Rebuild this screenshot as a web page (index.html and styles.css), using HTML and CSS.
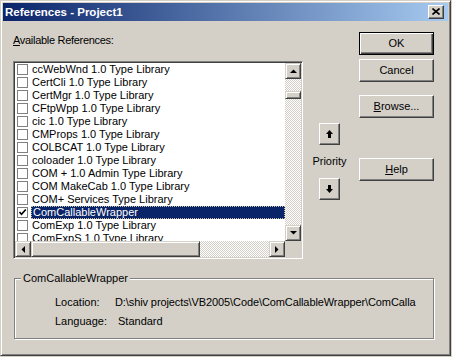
FILE: index.html
```html
<!DOCTYPE html>
<html>
<head>
<meta charset="utf-8">
<link rel="stylesheet" href="styles.css">
</head>
<body>
<div class="window">
  <div class="titlebar">
    <span class="title">References - Project1</span>
    <span class="close"><svg width="8" height="7" viewBox="0 0 8 7"><path d="M0.5 0.5 L7.5 6.5 M7.5 0.5 L0.5 6.5" stroke="#000" stroke-width="1.6"/></svg></span>
  </div>
  <div class="client">
    <div class="top">
      <div class="left">
        <div class="label"><u>A</u>vailable References:</div>
        <div class="listbox">
          <div class="rows">
            <div class="row"><span class="chk"></span><span class="txt">ccWebWnd 1.0 Type Library</span></div>
            <div class="row"><span class="chk"></span><span class="txt">CertCli 1.0 Type Library</span></div>
            <div class="row"><span class="chk"></span><span class="txt">CertMgr 1.0 Type Library</span></div>
            <div class="row"><span class="chk"></span><span class="txt">CFtpWpp 1.0 Type Library</span></div>
            <div class="row"><span class="chk"></span><span class="txt">cic 1.0 Type Library</span></div>
            <div class="row"><span class="chk"></span><span class="txt">CMProps 1.0 Type Library</span></div>
            <div class="row"><span class="chk"></span><span class="txt">COLBCAT 1.0 Type Library</span></div>
            <div class="row"><span class="chk"></span><span class="txt">coloader 1.0 Type Library</span></div>
            <div class="row"><span class="chk"></span><span class="txt">COM + 1.0 Admin Type Library</span></div>
            <div class="row"><span class="chk"></span><span class="txt">COM MakeCab 1.0 Type Library</span></div>
            <div class="row"><span class="chk"></span><span class="txt">COM+ Services Type Library</span></div>
            <div class="row selected"><span class="chk"><svg width="9" height="9" viewBox="0 0 9 9"><path d="M1.5 4 L3.5 6.2 L7.8 1.5" fill="none" stroke="#000" stroke-width="1.7"/></svg></span><span class="txt">ComCallableWrapper</span></div>
            <div class="row"><span class="chk"></span><span class="txt">ComExp 1.0 Type Library</span></div>
            <div class="row"><span class="chk"></span><span class="txt">ComExpS 1.0 Type Library</span></div>
          </div>
          <div class="vscroll">
            <div class="sbtn"><svg width="7" height="4" viewBox="0 0 7 4"><path d="M0 4 L7 4 L3.5 0.5 Z" fill="#000"/></svg></div>
            <div class="track vtrack"><div class="thumb vthumb"></div></div>
            <div class="sbtn"><svg width="7" height="4" viewBox="0 0 7 4"><path d="M0 0 L7 0 L3.5 3.5 Z" fill="#000"/></svg></div>
          </div>
          <div class="hscroll">
            <div class="sbtn"><svg width="4" height="7" viewBox="0 0 4 7"><path d="M4 0 L4 7 L0.5 3.5 Z" fill="#000"/></svg></div>
            <div class="track htrack"><div class="thumb hthumb"></div></div>
            <div class="sbtn"><svg width="4" height="7" viewBox="0 0 4 7"><path d="M0 0 L0 7 L3.5 3.5 Z" fill="#000"/></svg></div>
          </div>
          <div class="corner"></div>
        </div>
      </div>
      <div class="priority">
        <div class="pbtn"><svg width="7" height="8" viewBox="0 0 7 8"><path d="M3.5 0 L7 4 L5 4 L5 8 L2 8 L2 4 L0 4 Z" fill="#000"/></svg></div>
        <div class="plabel">Priority</div>
        <div class="pbtn"><svg width="7" height="8" viewBox="0 0 7 8"><path d="M3.5 8 L7 4 L5 4 L5 0 L2 0 L2 4 L0 4 Z" fill="#000"/></svg></div>
      </div>
      <div class="buttons">
        <div class="btn default">OK</div>
        <div class="btn cancel">Cancel</div>
        <div class="btn browse"><u>B</u>rowse...</div>
        <div class="btn help"><u>H</u>elp</div>
      </div>
    </div>
    <fieldset class="group">
      <legend>ComCallableWrapper</legend>
      <div class="info">
        <div class="irow"><span class="ilabel">Location:</span><span class="ival">D:\shiv projects\VB2005\Code\ComCallableWrapper\ComCalla</span></div>
        <div class="irow"><span class="ilabel">Language:</span><span class="ival lang">Standard</span></div>
      </div>
    </fieldset>
  </div>
</div>
</body>
</html>
```
FILE: styles.css
```css
body {
  margin: 0;
  background: #d4d0c8;
  font-family: "Liberation Sans", Arial, sans-serif;
  font-size: 11px;
  color: #000;
}
.window {
  box-sizing: border-box;
  width: 451px;
  height: 356px;
  padding: 2px;
  border: 1px solid;
  border-color: #d4d0c8 #404040 #404040 #d4d0c8;
  box-shadow: inset 1px 1px #fff, inset -1px -1px #808080;
  background: #d4d0c8;
}
.titlebar {
  height: 18px;
  background: linear-gradient(to right, #0a246a, #a6caf0);
  display: flex;
  align-items: center;
  justify-content: space-between;
  padding: 0 4px 0 2px;
}
.title {
  color: #fff;
  font-weight: bold;
  font-size: 11.5px;
  line-height: 18px;
}
.close {
  box-sizing: border-box;
  width: 16px;
  height: 14px;
  background: #d4d0c8;
  border: 1px solid;
  border-color: #fff #404040 #404040 #fff;
  box-shadow: inset -1px -1px #808080;
  display: flex;
  align-items: center;
  justify-content: center;
}
.close svg { display: block; margin-top: -1px; }
.client {
  padding: 11px 0 0 10px;
}
.top {
  display: flex;
}
.left {
  width: 290px;
  padding-top: 2px;
}
.label {
  line-height: 13px;
  margin-bottom: 14px;
  letter-spacing: -0.3px;
}
.listbox {
  box-sizing: border-box;
  width: 290px;
  height: 198px;
  border: 1px solid;
  border-color: #808080 #fff #fff #808080;
  box-shadow: inset 1px 1px #404040, inset -1px -1px #d4d0c8;
  padding: 1px;
  display: grid;
  grid-template-columns: 1fr 16px;
  grid-template-rows: 1fr 16px;
  background: #fff;
}
.rows {
  overflow: hidden;
  background: #fff;
}
.row {
  display: flex;
  align-items: center;
  height: 13px;
  line-height: 13px;
  white-space: nowrap;
}
.chk {
  box-sizing: border-box;
  width: 11px;
  height: 11px;
  margin-left: 2px;
  margin-right: 3px;
  border: 1px solid #808080;
  background: #fff;
  flex: none;
  display: flex;
  align-items: center;
  justify-content: center;
}
.chk svg { display: block; }
.txt {
  flex: 1;
  padding-left: 1px;
  height: 13px;
  box-sizing: border-box;
}
.selected .txt {
  background: #0a246a;
  color: #fff;
  border: 1px dotted #c8c0a0;
  line-height: 11px;
}
.vscroll {
  display: flex;
  flex-direction: column;
}
.hscroll {
  display: flex;
}
.sbtn {
  box-sizing: border-box;
  width: 16px;
  height: 16px;
  flex: none;
  background: #d4d0c8;
  border: 1px solid;
  border-color: #d4d0c8 #404040 #404040 #d4d0c8;
  box-shadow: inset 1px 1px #fff, inset -1px -1px #808080;
  display: flex;
  align-items: center;
  justify-content: center;
}
.track {
  flex: 1;
  background: repeating-conic-gradient(#fff 0 25%, #d4d0c8 0 50%) 0 0 / 2px 2px;
}
.thumb {
  box-sizing: border-box;
  background: #d4d0c8;
  border: 1px solid;
  border-color: #d4d0c8 #404040 #404040 #d4d0c8;
  box-shadow: inset 1px 1px #fff, inset -1px -1px #808080;
}
.vthumb {
  height: 8px;
  margin-top: 12px;
}
.htrack {
  display: flex;
}
.hthumb {
  width: 169px;
  height: 16px;
}
.corner {
  background: #d4d0c8;
}
.priority {
  width: 21px;
  margin-left: 16px;
  padding-top: 91px;
  display: flex;
  flex-direction: column;
  align-items: center;
}
.pbtn {
  box-sizing: border-box;
  width: 21px;
  height: 22px;
  flex: none;
  background: #d4d0c8;
  border: 1px solid;
  border-color: #fff #404040 #404040 #fff;
  box-shadow: inset -1px -1px #808080;
  display: flex;
  align-items: center;
  justify-content: center;
}
.plabel {
  line-height: 13px;
  margin: 10px 0 10px;
  white-space: nowrap;
}
.buttons {
  margin-left: 19px;
  display: flex;
  flex-direction: column;
}
.btn {
  box-sizing: border-box;
  width: 75px;
  height: 23px;
  background: #d4d0c8;
  border: 1px solid;
  border-color: #fff #404040 #404040 #fff;
  box-shadow: inset -1px -1px #808080;
  display: flex;
  align-items: center;
  justify-content: center;
  line-height: 13px;
}
.btn.default {
  border-color: #000;
  box-shadow: inset 1px 1px #fff, inset -1px -1px #404040, inset -2px -2px #808080;
}
.cancel { margin-top: 4px; }
.browse { margin-top: 13px; }
.help { margin-top: 40px; }
.group {
  box-sizing: border-box;
  width: 420px;
  margin: 13px 0 0 1px;
  padding: 0 0 10px 0;
  border: 1px solid #808080;
  box-shadow: inset 1px 1px #fff, 1px 1px #fff;
  min-inline-size: 0;
}
.group legend {
  padding: 0 2px;
  margin-left: 6px;
  line-height: 13px;
  background: #d4d0c8;
}
.info {
  padding: 11px 0 0 40px;
  display: flex;
  flex-direction: column;
  gap: 6px;
}
.irow {
  display: flex;
  line-height: 13px;
  white-space: nowrap;
}
.ilabel {
  width: 60px;
  flex: none;
}
.ival {
  letter-spacing: -0.1px;
}
.ival.lang {
  margin-left: 3px;
  letter-spacing: 0;
}
```
